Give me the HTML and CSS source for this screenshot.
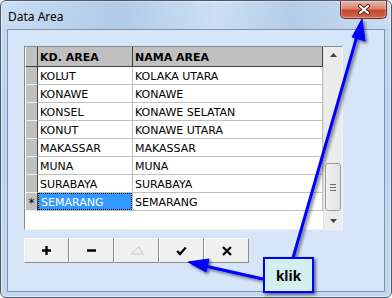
FILE: index.html
```html
<!DOCTYPE html>
<html>
  <head>
    <meta charset="UTF-8" />
    <title>Data Area</title>
    <link rel="stylesheet" href="styles.css">
  </head>
  <body>
    <div class="window">
      <div class="titlebar">
        <span class="title">Data Area</span>
        <div class="close">
          <svg width="14" height="11" viewBox="0 0 14 11">
            <path d="M3 2 L11 9 M11 2 L3 9" stroke="#5a2a22" stroke-width="4" stroke-linecap="round" />
            <path d="M3 2 L11 9 M11 2 L3 9" stroke="#ffffff" stroke-width="2" stroke-linecap="round" />
          </svg>
        </div>
      </div>

      <div class="client">
        <div class="grid">
          <div class="table">
            <div class="ind head"></div>
            <div class="hcell">KD. AREA</div>
            <div class="hcell">NAMA AREA</div>

            <div class="ind"></div><div class="cell">KOLUT</div><div class="cell">KOLAKA UTARA</div>
            <div class="ind"></div><div class="cell">KONAWE</div><div class="cell">KONAWE</div>
            <div class="ind"></div><div class="cell">KONSEL</div><div class="cell">KONAWE SELATAN</div>
            <div class="ind"></div><div class="cell">KONUT</div><div class="cell">KONAWE UTARA</div>
            <div class="ind"></div><div class="cell">MAKASSAR</div><div class="cell">MAKASSAR</div>
            <div class="ind"></div><div class="cell">MUNA</div><div class="cell">MUNA</div>
            <div class="ind"></div><div class="cell">SURABAYA</div><div class="cell">SURABAYA</div>
            <div class="ind star">*</div><div class="cell selected"><span>SEMARANG</span></div><div class="cell">SEMARANG</div>
          </div>
          <div class="scrollbar">
            <div class="sb-arrow">
              <svg width="7" height="4" viewBox="0 0 7 4"><path d="M0 4 L3.5 0 L7 4 Z" fill="#404040" /></svg>
            </div>
            <div class="sb-track">
              <div class="thumb">
                <span></span><span></span><span></span>
              </div>
            </div>
            <div class="sb-arrow">
              <svg width="7" height="4" viewBox="0 0 7 4"><path d="M0 0 L3.5 4 L7 0 Z" fill="#404040" /></svg>
            </div>
          </div>
        </div>

        <div class="toolbar">
          <div class="btn">
            <svg width="11" height="11" viewBox="0 0 11 11"><path d="M5.5 1 V10 M1 5.5 H10" stroke="#000" stroke-width="2.4" /></svg>
          </div>
          <div class="btn">
            <svg width="11" height="11" viewBox="0 0 11 11"><path d="M1 5.5 H10" stroke="#000" stroke-width="2.6" /></svg>
          </div>
          <div class="btn">
            <svg width="14" height="9" viewBox="0 0 14 9"><path d="M1 8 L9 1 L13 8 Z" fill="none" stroke="#c8c8c8" stroke-width="1" /></svg>
          </div>
          <div class="btn">
            <svg width="11" height="10" viewBox="0 0 11 10"><path d="M1.2 5 L4 8 L9.8 1.5" fill="none" stroke="#000" stroke-width="2.2" /></svg>
          </div>
          <div class="btn">
            <svg width="10" height="10" viewBox="0 0 10 10"><path d="M1 1 L9 9 M9 1 L1 9" stroke="#000" stroke-width="2.2" /></svg>
          </div>
        </div>
      </div>

      <svg class="arrows" width="392" height="298" viewBox="0 0 392 298">
        <defs>
          <filter id="shadow" x="-20%" y="-20%" width="140%" height="140%">
            <feDropShadow dx="2" dy="2" stdDeviation="1.5" flood-color="#1a1a40" flood-opacity="0.6" />
          </filter>
        </defs>
        <g filter="url(#shadow)" fill="#0000ff" stroke="#0000ff">
          <path d="M293 258 L357 36" stroke-width="3" fill="none" />
          <path d="M362 19 L365 41 L352 37 Z" stroke-width="1" />
          <path d="M263 279 L205 266" stroke-width="3" fill="none" />
          <path d="M188 262 L209 259 L206 272 Z" stroke-width="1" />
        </g>
      </svg>
      <div class="callout">klik</div>
    </div>
  </body>
</html>
```

FILE: styles.css
```css
body {
  margin: 0;
  font-family: "DejaVu Sans", sans-serif;
}

.window {
  position: relative;
  width: 392px;
  height: 298px;
  box-sizing: border-box;
  border: 1px solid #4c5868;
  border-radius: 6px;
  background: linear-gradient(180deg, #c4daf2 0%, #bcd4ee 40%, #c2d8f0 100%);
  box-shadow: inset 0 0 0 1px rgba(255, 255, 255, 0.55);
  overflow: hidden;
}

.titlebar {
  height: 28px;
  display: flex;
  justify-content: space-between;
  align-items: flex-start;
  background: linear-gradient(90deg, rgba(255,255,255,0.1) 0%, rgba(120,160,200,0.25) 30%, rgba(255,255,255,0.15) 55%, rgba(120,150,190,0.2) 75%, rgba(255,255,255,0.1) 100%);
}

.title {
  font-family: "Noto Sans", sans-serif;
  font-size: 12px;
  color: #000;
  margin: 7px 0 0 7px;
}

.close {
  width: 47px;
  height: 18px;
  margin-right: 4px;
  box-sizing: border-box;
  border: 1px solid #6b2b20;
  border-top: none;
  border-radius: 0 0 5px 5px;
  background: linear-gradient(180deg, #e8b3a8 0%, #d9846f 45%, #c4452c 55%, #cf6a4f 100%);
  box-shadow: inset 0 0 0 1px rgba(255, 255, 255, 0.35);
  display: flex;
  align-items: center;
  justify-content: center;
}

.client {
  margin: 0 6px;
  height: 263px;
  box-sizing: border-box;
  border: 1px solid #7f93aa;
  background: #d6e6f8;
  padding: 16px 0 0 16px;
}

.grid {
  width: 319px;
  height: 184px;
  box-sizing: border-box;
  border: 1px solid;
  border-color: #8a8a8a #f4f4f4 #f4f4f4 #8a8a8a;
  background: #fff;
  display: flex;
}

.table {
  width: 298px;
  display: grid;
  grid-template-columns: 13px 95px 190px;
  grid-template-rows: 20px repeat(8, 18px);
  align-content: start;
}

.ind {
  box-sizing: border-box;
  background: #c0c0c0;
  border-right: 1px solid #404040;
  border-bottom: 1px solid #f0f0f0;
  border-left: 1px solid #fff;
}

.ind.head {
  border-bottom: 1px solid #404040;
}

.star {
  font-size: 12px;
  line-height: 20px;
  text-align: center;
  color: #000;
}

.hcell {
  box-sizing: border-box;
  background: #c0c0c0;
  border-right: 1px solid #404040;
  border-bottom: 1px solid #404040;
  font-weight: bold;
  font-size: 11px;
  line-height: 17px;
  padding: 2px 0 0 2px;
  color: #000;
}

.cell {
  box-sizing: border-box;
  border-right: 1px solid #c0c0c0;
  border-bottom: 1px solid #c0c0c0;
  font-size: 11px;
  line-height: 16px;
  padding: 2px 0 0 2px;
  color: #000;
  white-space: nowrap;
}

.cell.selected {
  padding: 0;
}

.cell.selected span {
  display: block;
  height: 17px;
  box-sizing: border-box;
  padding: 2px 0 0 2px;
  background: #3399ff;
  color: #fff;
  line-height: 13px;
  border: 1px dotted #000;
}

.scrollbar {
  width: 19px;
  display: flex;
  flex-direction: column;
  background: #ececec;
  border-left: 1px solid #e0e0e0;
  box-sizing: border-box;
}

.sb-arrow {
  height: 16px;
  display: flex;
  align-items: center;
  justify-content: center;
}

.sb-track {
  flex: 1;
  display: flex;
  flex-direction: column;
  justify-content: flex-end;
  padding-bottom: 2px;
}

.thumb {
  height: 48px;
  margin: 0 1px;
  box-sizing: border-box;
  border: 1px solid #9a9a9a;
  border-radius: 3px;
  background: linear-gradient(90deg, #f2f2f2, #e2e2e2);
  display: flex;
  flex-direction: column;
  align-items: center;
  justify-content: center;
  gap: 2px;
}

.thumb span {
  width: 6px;
  height: 1px;
  background: #6a6a6a;
}

.toolbar {
  display: flex;
  margin-top: 8px;
}

.btn {
  width: 45px;
  height: 25px;
  box-sizing: border-box;
  border: 1px solid;
  border-color: #fcfcfc #8c8c8c #8c8c8c #fcfcfc;
  background: #f0f0f0;
  display: flex;
  align-items: center;
  justify-content: center;
}

.arrows {
  position: absolute;
  left: -1px;
  top: -1px;
  pointer-events: none;
}

.callout {
  position: absolute;
  left: 262px;
  top: 256px;
  width: 51px;
  height: 36px;
  box-sizing: border-box;
  border: 2px solid #0000ff;
  background: #d4eff0;
  box-shadow: 2px 2px 3px rgba(20, 20, 60, 0.6);
  font-family: "Liberation Sans", sans-serif;
  font-weight: bold;
  font-size: 15px;
  display: flex;
  align-items: center;
  justify-content: center;
  color: #000;
}
```
